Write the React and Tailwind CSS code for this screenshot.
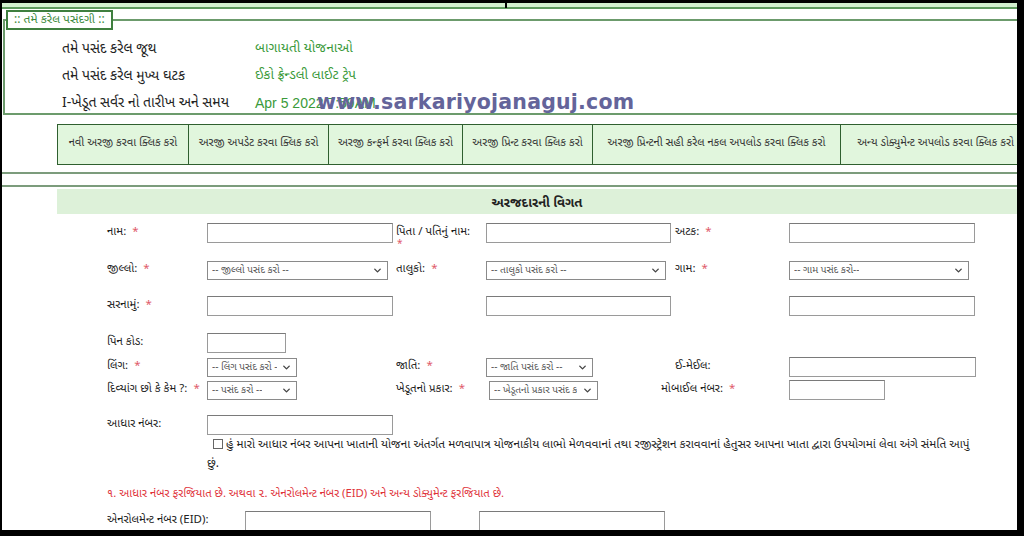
import { ChevronDown } from 'lucide-react';

const guj = { fontFamily: "'Noto Sans Gujarati', 'Lohit Gujarati', 'Shruti', 'Noto Sans', 'Liberation Sans', sans-serif" };

const navItems = [
    { text: 'નવી અરજી કરવા ક્લિક કરો', w: 'w-[130px]' },
    { text: 'અરજી અપડેટ કરવા ક્લિક કરો', w: 'w-[140px]' },
    { text: 'અરજી કન્ફર્મ કરવા ક્લિક કરો', w: 'w-[134px]' },
    { text: 'અરજી પ્રિન્ટ કરવા ક્લિક કરો', w: 'w-[130px]' },
    { text: 'અરજી પ્રિન્ટની સહી કરેલ નકલ અપલોડ કરવા ક્લિક કરો', w: 'w-[248px]' },
    { text: 'અન્ય ડોક્યુમેન્ટ અપલોડ કરવા ક્લિક કરો', w: 'w-[190px]' },
];

function Star() {
    return <span className="text-[#e05a6a] ml-[6px]">*</span>;
}

function Label({ children, req, className = '' }) {
    return (
        <div className={`text-[11.5px] text-[#222] leading-none shrink-0 whitespace-nowrap ${className}`}>
            {children}
            {req && <Star />}
        </div>
    );
}

function Input({ className = '' }) {
    return <div className={`h-[20px] border border-[#9a9a9a] border-t-[#7a7a7a] bg-white shrink-0 ${className}`} />;
}

function Select({ text, className = '' }) {
    return (
        <div className={`h-[19px] border border-[#8a8a8a] bg-white shrink-0 flex items-center justify-between pl-[4px] pr-[4px] overflow-hidden ${className}`}>
            <span className="text-[10px] text-[#555] whitespace-nowrap overflow-hidden">{text}</span>
            <ChevronDown size={11} strokeWidth={3} className="text-[#444] shrink-0" />
        </div>
    );
}

export default function App() {
    return (
        <div className="w-[1024px] h-[536px] overflow-hidden bg-black pt-[3px] pl-[2px] pr-[7px] pb-[6px]" style={guj}>
            <div className="relative w-full h-full bg-white overflow-hidden">
                {/* top strip */}
                <div className="h-[6px] bg-[#d3f0cf] border-b-2 border-[#5f9a5f]" />

                {/* --- fieldset: selections --- */}
                <fieldset className="border-2 border-[#6c9b6c] border-r-0 mt-[1px] ml-[1px] pl-0 pr-0 pt-[6px] pb-0 min-w-0">
                    <legend className="ml-[1px] border-2 border-[#3f7f3f] px-[6px] h-[20px] flex items-center text-[12px] text-[#3d8a3d]">
                        :: તમે કરેલ પસંદગી ::
                    </legend>
                    <div className="pl-[57px] text-[14px]">
                        <div className="h-[27px] flex items-center">
                            <div className="w-[193px] text-[#222]">તમે પસંદ કરેલ જૂથ</div>
                            <div className="text-[#3a9a3a] text-[13.5px]">બાગાયતી યોજનાઓ</div>
                        </div>
                        <div className="h-[27px] flex items-center">
                            <div className="w-[193px] text-[#222]">તમે પસંદ કરેલ મુખ્ય ઘટક</div>
                            <div className="text-[#3a9a3a] text-[13.5px]">ઈકો ફ્રેન્ડલી લાઈટ ટ્રેપ</div>
                        </div>
                        <div className="h-[23px] flex items-center pt-[3px]">
                            <div className="w-[193px] text-[#222]">I-ખેડૂત સર્વર નો તારીખ અને સમય</div>
                            <div className="text-[#3a9a3a] text-[14px]" style={{ fontFamily: "'Liberation Sans', Arial, sans-serif" }}>Apr 5 2022 7:59AM</div>
                        </div>
                    </div>
                </fieldset>

                {/* watermark */}
                <div className="absolute left-[315px] top-[84px] text-[20.5px] font-bold text-[#64649a] tracking-[0.2px]" style={{ fontFamily: "'DejaVu Sans', Verdana, sans-serif" }}>
                    www.sarkariyojanaguj.com
                </div>

                {/* --- nav buttons --- */}
                <div className="mt-[9px] pl-[55px] flex">
                    <div className="flex border border-[#2f5f2f] bg-[#e1f6dd] h-[41px]">
                        {navItems.map((n, i) => (
                            <div key={i} className={`${n.w} shrink-0 flex items-center justify-center text-[11.2px] whitespace-nowrap text-[#333] ${i > 0 ? 'border-l border-[#2f5f2f]' : ''}`}>
                                {n.text}
                            </div>
                        ))}
                    </div>
                </div>

                <div className="mt-[7px] h-[15px] border-t-2 border-b-2 border-[#7c9c7c]" />

                {/* --- section header --- */}
                <div className="ml-[55px] mt-[2px] h-[25px] bg-[#ddf1d9] flex items-center justify-center pt-[5px] font-bold text-[13px] text-[#222]">
                    અરજદારની વિગત
                </div>

                {/* --- form --- */}
                <div className="pl-[105px] pt-[9px]">
                    <div className="flex items-center h-[20px]">
                        <Label req className="w-[100px]">નામ:</Label>
                        <Input className="w-[186px]" />
                        <div className="w-[93px] pl-[3px] text-[11.5px] text-[#222] relative whitespace-nowrap">
                            પિતા / પતિનું નામ:
                            <span className="absolute left-[4px] top-[13px] text-[#e05a6a] text-[10px]">*</span>
                        </div>
                        <Input className="w-[185px]" />
                        <Label req className="w-[118px] pl-[4px]">અટક:</Label>
                        <Input className="w-[186px]" />
                    </div>

                    <div className="flex items-center h-[20px] mt-[17px]">
                        <Label req className="w-[100px]">જીલ્લો:</Label>
                        <Select text="-- જીલ્લો પસંદ કરો --" className="w-[181px]" />
                        <Label req className="w-[98px] pl-[8px]">તાલુકો:</Label>
                        <Select text="-- તાલુકો પસંદ કરો --" className="w-[180px]" />
                        <Label req className="w-[123px] pl-[9px]">ગામ:</Label>
                        <Select text="-- ગામ પસંદ કરો--" className="w-[180px]" />
                    </div>

                    <div className="flex items-center h-[20px] mt-[16px]">
                        <Label req className="w-[100px]">સરનામું:</Label>
                        <Input className="w-[186px]" />
                        <div className="w-[93px]" />
                        <Input className="w-[185px]" />
                        <div className="w-[118px]" />
                        <Input className="w-[186px]" />
                    </div>

                    <div className="flex items-center h-[20px] mt-[17px]">
                        <Label className="w-[100px]">પિન કોડ:</Label>
                        <Input className="w-[79px]" />
                    </div>

                    <div className="flex items-center h-[20px] mt-[4px]">
                        <Label req className="w-[100px]">લિંગ:</Label>
                        <Select text="-- લિંગ પસંદ કરો -" className="w-[90px]" />
                        <Label req className="w-[189px] pl-[99px]">જાતિ:</Label>
                        <Select text="-- જાતિ પસંદ કરો --" className="w-[107px]" />
                        <Label className="w-[196px] pl-[82px]">ઈ-મેઈલ:</Label>
                        <Input className="w-[187px]" />
                    </div>

                    <div className="flex items-center h-[20px] mt-[3px]">
                        <Label req className="w-[100px]">દિવ્યાંગ છો કે કેમ ?:</Label>
                        <Select text="-- પસંદ કરો --" className="w-[90px]" />
                        <Label req className="w-[192px] pl-[99px]">ખેડૂતનો પ્રકાર:</Label>
                        <Select text="-- ખેડૂતનો પ્રકાર પસંદ ક" className="w-[109px]" />
                        <Label req className="w-[191px] pl-[63px]">મોબાઈલ નંબર:</Label>
                        <Input className="w-[96px]" />
                    </div>

                    <div className="flex items-center h-[20px] mt-[15px]">
                        <Label className="w-[100px]">આધાર નંબર:</Label>
                        <Input className="w-[186px]" />
                    </div>

                    <div className="pl-[100px] pr-[40px] mt-[1px] text-[11.8px] leading-[19px] text-[#222]">
                        <span className="inline-block w-[10px] h-[10px] border border-[#666] align-[-1px] ml-[6px] mr-[3px] bg-white" />
                        હું મારો આધાર નંબર આપના ખાતાની યોજના અંતર્ગત મળવાપાત્ર યોજનાકીય લાભો મેળવવાનાં તથા રજીસ્ટ્રેશન કરાવવાનાં હેતુસર આપના ખાતા દ્વારા ઉપયોગમાં લેવા અંગે સંમતિ આપું છું.
                    </div>

                    <div className="mt-[13px] text-[11.3px] text-[#e0333a] whitespace-nowrap">
                        ૧. આધાર નંબર ફરજિયાત છે. અથવા ૨. એનરોલમેન્ટ નંબર (EID) અને અન્ય ડોક્યુમેન્ટ ફરજિયાત છે.
                    </div>

                    <div className="flex items-center h-[20px] mt-[7px]">
                        <Label className="w-[138px]">એનરોલમેન્ટ નંબર (EID):</Label>
                        <Input className="w-[186px]" />
                        <div className="w-[48px]" />
                        <Input className="w-[186px]" />
                    </div>
                </div>

                {/* cursor tick */}
                <div className="absolute left-[503px] top-0 w-[2px] h-[5px] bg-black" />
            </div>
        </div>
    );
}
